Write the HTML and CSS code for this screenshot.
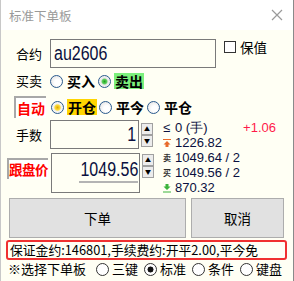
FILE: index.html
```html
<!DOCTYPE html>
<html>
    <head>
        <title>标准下单板</title>
        <link rel="stylesheet" href="styles.css">
    </head>
    <body>
        <div class="win">
            <div class="titlebar">
                <span class="title">标准下单板</span>
                <svg class="close" width="12" height="12" viewBox="0 0 12 12"><path d="M1 1L11 11M11 1L1 11" stroke="#9a9a9a" stroke-width="1.2" fill="none"/></svg>
            </div>
            <div class="content">
                <div class="row r-contract">
                    <span class="lbl">合约</span>
                    <div class="field code"><span class="val">au2606</span></div>
                    <span class="chk"><span class="box"></span>保值</span>
                </div>
                <div class="row r-side">
                    <span class="lbl">买卖</span>
                    <span class="opt"><span class="radio"></span><span class="txt">买入</span></span>
                    <span class="opt"><span class="radio on-green"></span><span class="txt hl-green">卖出</span></span>
                </div>
                <div class="row r-open">
                    <span class="tag tag-auto">自动</span>
                    <span class="opt"><span class="radio on-yellow"></span><span class="txt hl-yellow">开仓</span></span>
                    <span class="opt"><span class="radio"></span><span class="txt">平今</span></span>
                    <span class="opt"><span class="radio"></span><span class="txt">平仓</span></span>
                </div>
                <div class="order">
                    <div class="inputs">
                        <div class="row r-qty">
                            <span class="lbl">手数</span>
                            <div class="field num"><span class="val">1</span></div>
                            <div class="spin"><span class="up">&#9650;</span><span class="dn">&#9660;</span></div>
                        </div>
                        <div class="row r-price">
                            <span class="tag tag-price">跟盘价</span>
                            <div class="field num price"><span class="val">1049.56</span><span class="bar"></span></div>
                            <div class="spin"><span class="up">&#9650;</span><span class="dn">&#9660;</span></div>
                        </div>
                    </div>
                    <div class="quote">
                        <div class="q"><span class="ic">&le;</span>0 (手)<span class="chg">+1.06</span></div>
                        <div class="q"><svg class="ic" width="8" height="10" viewBox="0 0 8 10"><path d="M0 1.5H8" stroke="#e86a2a" stroke-width="1"/><path d="M4 3L7.5 6.5H5.5V9H2.5V6.5H0.5Z" fill="#e86a2a"/></svg>1226.82</div>
                        <div class="q"><span class="ic cn">卖</span>1049.64 / 2</div>
                        <div class="q"><span class="ic cn">买</span>1049.56 / 2</div>
                        <div class="q"><svg class="ic" width="8" height="10" viewBox="0 0 8 10"><path d="M4 7L7.5 3.5H5.5V1H2.5V3.5H0.5Z" fill="#3cb43c"/><path d="M0 9H8" stroke="#3cb43c" stroke-width="1"/></svg>870.32</div>
                    </div>
                </div>
                <div class="btns">
                    <div class="btn btn-order">下单</div>
                    <div class="btn btn-cancel">取消</div>
                </div>
                <div class="info">保证金约:146801,手续费约:开平2.00,平今免</div>
                <div class="panels">
                    <span class="ptitle">※选择下单板</span>
                    <span class="popt"><span class="pr"></span>三键</span>
                    <span class="popt"><span class="pr sel"></span>标准</span>
                    <span class="popt"><span class="pr"></span>条件</span>
                    <span class="popt"><span class="pr"></span>键盘</span>
                </div>
            </div>
        </div>
    </body>
</html>
```

FILE: styles.css
```css
body{
    margin:0;
    font-family:"Noto Sans CJK SC","Liberation Sans",sans-serif;
    color:#000;
}
.win{
    width:294px;
    height:281px;
    background:#fffff4;
    border-left:1px solid #c8c8c8;
    border-right:1px solid #8a8a8a;
    box-sizing:border-box;
    overflow:hidden;
}
.titlebar{
    height:30px;
    background:#fff;
    display:flex;
    align-items:center;
    justify-content:space-between;
    padding:0 10px 0 8px;
}
.title{
    font-size:12.5px;
    color:#9a9a9a;
}
.row{
    display:flex;
    align-items:center;
}
.lbl{
    width:26px;
    margin-left:15px;
    margin-right:8px;
    font-size:13px;
    line-height:14px;
}
.field{
    background:#fffff4;
    border:1px solid #7a7a7a;
    box-sizing:border-box;
    font-family:"Liberation Sans",sans-serif;
    color:#0a1040;
    font-size:20px;
}
.val{
    display:inline-block;
    transform:scaleX(0.8);
}
.r-contract{
    height:29px;
    margin-top:9px;
}
.code{
    width:166px;
    height:29px;
    line-height:27px;
    padding-left:3px;
}
.code .val{
    transform-origin:left center;
}
.chk{
    display:flex;
    align-items:center;
    font-size:13.5px;
    margin-left:8px;
    align-self:flex-start;
    margin-top:-2px;
}
.box{
    width:10px;
    height:10px;
    border:1px solid #333;
    background:#fff;
    margin-right:4px;
}
.r-side{
    height:18px;
    margin-top:4px;
}
.opt{
    display:flex;
    align-items:center;
    margin-right:2px;
}
.radio{
    width:11px;
    height:11px;
    border:1px solid #2a5a8e;
    border-radius:50%;
    background:radial-gradient(circle at 60% 60%,#fff 30%,#dcdcdc 100%);
    margin-right:3px;
}
.radio.on-green{
    background:radial-gradient(circle,#1ea01e 0,#5fd05f 30%,#e8e8e8 45%,#fff 100%);
}
.radio.on-yellow{
    background:radial-gradient(circle,#e0a800 0,#ffe040 35%,#f0f0f0 48%,#fff 100%);
}
.txt{
    font-size:14px;
    font-weight:bold;
    line-height:16px;
    padding:0 1px;
}
.hl-green{
    background:#7cf07c;
}
.hl-yellow{
    background:#ffd500;
}
.r-open{
    height:24px;
    margin-top:5px;
}
.tag{
    background:#fff;
    color:#ff0000;
    font-weight:bold;
    font-size:14px;
    border-top:2px solid #a8a8a8;
    border-left:2px solid #a8a8a8;
    box-sizing:border-box;
    text-align:center;
}
.tag-auto{
    width:32px;
    height:22px;
    line-height:20px;
    margin-left:13px;
    margin-right:5px;
}
.order{
    display:flex;
}
.inputs{
    width:160px;
    padding-top:1px;
}
.r-qty{
    height:29px;
}
.num{
    width:89px;
    height:29px;
    text-align:right;
    line-height:27px;
    padding-right:2px;
}
.num .val{
    transform-origin:right center;
}
.spin{
    width:12px;
    display:flex;
    flex-direction:column;
    margin-left:2px;
}
.spin span{
    height:12px;
    border:1px solid #a0a0a0;
    background:#ececec;
    box-sizing:border-box;
    font-size:6px;
    line-height:10px;
    text-align:center;
    color:#000;
}
.r-price{
    height:40px;
    margin-top:4px;
    align-items:flex-start;
}
.tag-price{
    width:41px;
    height:21px;
    line-height:19px;
    margin:5px 3px 0 6px;
    font-size:13.5px;
    letter-spacing:-0.5px;
}
.price{
    position:relative;
    height:40px;
    line-height:30px;
    padding-right:1px;
}
.r-price .spin{
    margin-top:1px;
}
.bar{
    position:absolute;
    left:27px;
    right:1px;
    top:27px;
    height:2px;
    background:#b4b4b4;
}
.quote{
    padding-top:1px;
    font-family:"Liberation Sans",sans-serif;
    font-size:13px;
    color:#0a1040;
    flex:1;
}
.q{
    height:15px;
    line-height:15px;
    display:flex;
    align-items:center;
}
.ic{
    width:8px;
    margin-left:2px;
    margin-right:4px;
}
.ic.cn{
    font-family:"Noto Sans CJK SC",sans-serif;
    font-size:8px;
    font-weight:bold;
    color:#333;
}
.chg{
    color:#ff1a4a;
    margin-left:auto;
    margin-right:17px;
}
.btns{
    display:flex;
    gap:5px;
    margin:3px 0 0 8px;
}
.btn{
    height:40px;
    background:#e1e1e1;
    border:1px solid #adadad;
    box-sizing:border-box;
    display:flex;
    align-items:center;
    justify-content:center;
    font-size:13.5px;
}
.btn-order{
    width:177px;
}
.btn-cancel{
    width:93px;
}
.info{
    margin:2px 0 0 5px;
    width:281px;
    height:20px;
    border:2px solid #f03030;
    border-radius:3px;
    box-sizing:border-box;
    font-size:12.8px;
    line-height:16px;
    padding-left:2px;
    white-space:nowrap;
    overflow:hidden;
}
.panels{
    display:flex;
    align-items:center;
    font-size:13px;
    margin:1px 0 0 7px;
    height:16px;
    line-height:16px;
}
.ptitle{
    margin-right:4px;
}
.popt{
    display:flex;
    align-items:center;
    margin-left:6px;
}
.pr{
    width:13px;
    height:13px;
    border:1px solid #333;
    border-radius:50%;
    margin-right:3px;
    box-sizing:border-box;
    background:#fff;
}
.pr.sel{
    background:radial-gradient(circle,#111 0,#111 35%,#fff 42%);
}
```
